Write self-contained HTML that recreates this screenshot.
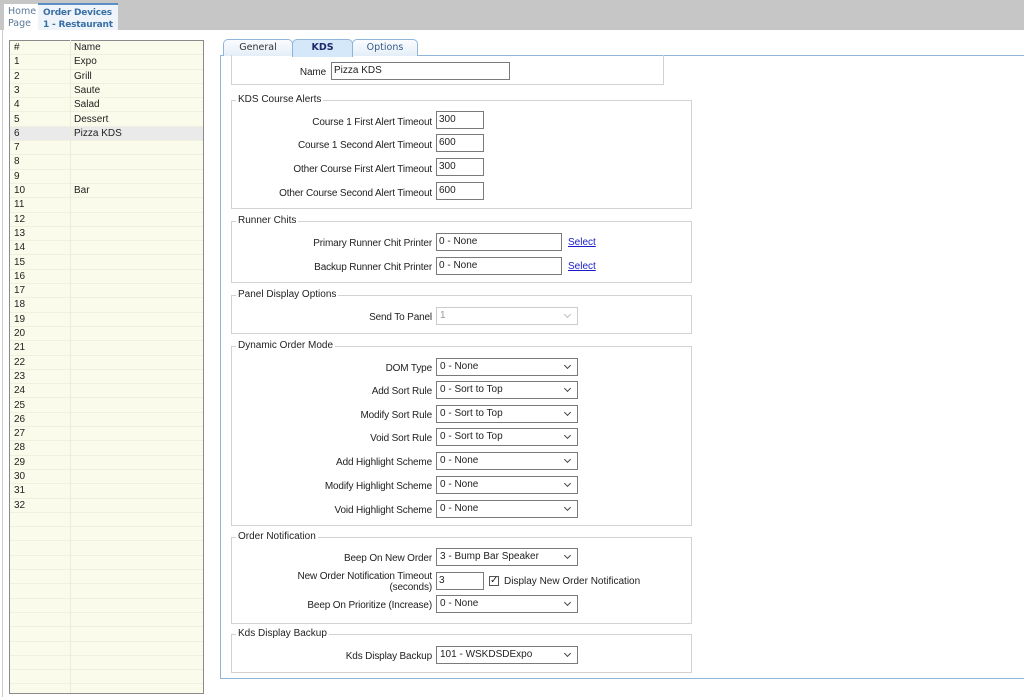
<!DOCTYPE html>
<html><head><meta charset="utf-8"><style>
*{margin:0;padding:0;box-sizing:border-box}
body{width:1024px;height:697px;position:relative;background:#fff;font-family:"Liberation Sans",Arial,sans-serif;font-size:10px;color:#222;overflow:hidden}
.a{position:absolute}
.top{left:0;top:0;width:1024px;height:30px;background:#c6c6c6}
.tab1{left:4px;top:4px;width:34px;height:26px;background:#fff;color:#5a7a9a;line-height:12px;padding:2px 0 0 4px;font-family:"DejaVu Sans",sans-serif;font-size:9.5px;white-space:nowrap}
.tab2{left:38px;top:3px;width:80px;height:27px;background:#eef4fa;border-top:2px solid #5c8fc4;color:#3a6fa5;font-weight:bold;font-family:"DejaVu Sans",sans-serif;font-size:9px;line-height:12px;padding:2px 0 0 5px;white-space:nowrap;overflow:hidden;letter-spacing:-0.2px}
.list{left:9px;top:40px;width:195px;height:654px;border:1px solid #8a8a8a;background:#fbfbec;overflow:hidden}
.row{position:absolute;left:0;width:193px;height:14.3px;border-bottom:1px solid #f0f0e0;line-height:13px}
.row span{position:absolute;left:4px}
.row b{position:absolute;left:64px;font-weight:normal}
.vline{left:70px;top:40px;width:1px;height:653px;background:#ececdc}
.tab{top:39px;height:17px;border:1px solid #8fb6da;border-bottom:none;border-radius:5px 5px 0 0;background:linear-gradient(#fafcfe,#e4eef8);font-family:"DejaVu Sans",sans-serif;font-size:9.5px;text-align:center;line-height:15px;color:#333}
.panel{left:220px;top:55px;width:810px;height:624px;border:1px solid #8fb6da}
.g{position:absolute;border:1px solid #d2d2d2}
.lg{position:absolute;background:#fff;padding:0 2px;left:4px;top:-7px;line-height:12px}
.l{position:absolute;left:232px;width:200px;text-align:right;line-height:13px;letter-spacing:-0.15px}
.i{position:absolute;left:436px;height:18px;border:1px solid #7a7a7a;background:#fff;padding-left:2px;line-height:15px}
.s{position:absolute;left:436px;width:142px;height:18px;border:1px solid #7a7a7a;background:#fff;padding-left:3px;line-height:15px}
.s:after{content:"";position:absolute;right:7px;top:4px;width:4px;height:4px;border-right:1.3px solid #444;border-bottom:1.3px solid #444;transform:rotate(45deg)}
.dis{border-color:#ccc;color:#999}.dis:after{border-color:#bbb}
a{color:#1a1acc;text-decoration:underline;position:absolute}
</style></head><body>
<div class="a top"></div>
<div class="a tab1">Home<br>Page</div>
<div class="a tab2">Order Devices<br>1 - Restaurant</div>
<div class="a" style="left:2px;top:30px;width:1px;height:667px;background:#ccc"></div>

<div class="a list">
<div class="row" style="top:0"><span>#</span><b>Name</b></div>
<div class="row" style="top:14.3px"><span>1</span><b>Expo</b></div>
<div class="row" style="top:28.6px"><span>2</span><b>Grill</b></div>
<div class="row" style="top:42.9px"><span>3</span><b>Saute</b></div>
<div class="row" style="top:57.2px"><span>4</span><b>Salad</b></div>
<div class="row" style="top:71.5px"><span>5</span><b>Dessert</b></div>
<div class="row" style="top:85.8px;background:#eaeaea"><span>6</span><b>Pizza KDS</b></div>
<div class="row" style="top:100.1px"><span>7</span></div>
<div class="row" style="top:114.4px"><span>8</span></div>
<div class="row" style="top:128.7px"><span>9</span></div>
<div class="row" style="top:143px"><span>10</span><b>Bar</b></div>
<div class="row" style="top:157.3px"><span>11</span></div>
<div class="row" style="top:171.6px"><span>12</span></div>
<div class="row" style="top:185.9px"><span>13</span></div>
<div class="row" style="top:200.2px"><span>14</span></div>
<div class="row" style="top:214.5px"><span>15</span></div>
<div class="row" style="top:228.8px"><span>16</span></div>
<div class="row" style="top:243.1px"><span>17</span></div>
<div class="row" style="top:257.4px"><span>18</span></div>
<div class="row" style="top:271.7px"><span>19</span></div>
<div class="row" style="top:286px"><span>20</span></div>
<div class="row" style="top:300.3px"><span>21</span></div>
<div class="row" style="top:314.6px"><span>22</span></div>
<div class="row" style="top:328.9px"><span>23</span></div>
<div class="row" style="top:343.2px"><span>24</span></div>
<div class="row" style="top:357.5px"><span>25</span></div>
<div class="row" style="top:371.8px"><span>26</span></div>
<div class="row" style="top:386.1px"><span>27</span></div>
<div class="row" style="top:400.4px"><span>28</span></div>
<div class="row" style="top:414.7px"><span>29</span></div>
<div class="row" style="top:429px"><span>30</span></div>
<div class="row" style="top:443.3px"><span>31</span></div>
<div class="row" style="top:457.6px"><span>32</span></div>
<div class="row" style="top:471.9px"></div><div class="row" style="top:486.2px"></div>
<div class="row" style="top:500.5px"></div><div class="row" style="top:514.8px"></div>
<div class="row" style="top:529.1px"></div><div class="row" style="top:543.4px"></div>
<div class="row" style="top:557.7px"></div><div class="row" style="top:572px"></div>
<div class="row" style="top:586.3px"></div><div class="row" style="top:600.6px"></div>
<div class="row" style="top:614.9px"></div><div class="row" style="top:629.2px"></div>
</div>
<div class="a vline"></div>

<div class="a panel"></div>
<div class="a tab" style="left:223px;width:70px">General</div>
<div class="a tab" style="left:352px;width:66px;color:#3a5a8a">Options</div>
<div class="a tab" style="left:292px;width:61px;background:#d4e8fa;font-weight:bold;color:#1a2a6a;height:18px">KDS</div>

<div class="g" style="left:231px;top:55px;width:433px;height:30px;border-top:none"></div>
<div class="l" style="top:66px;left:126px">Name</div>
<div class="i" style="top:62px;left:331px;width:179px">Pizza KDS</div>

<div class="g" style="left:231px;top:100px;width:461px;height:109px"><div class="lg">KDS Course Alerts</div></div>
<div class="l" style="top:116px">Course 1 First Alert Timeout</div><div class="i" style="top:111px;width:48px">300</div>
<div class="l" style="top:139px">Course 1 Second Alert Timeout</div><div class="i" style="top:134px;width:48px">600</div>
<div class="l" style="top:163px">Other Course First Alert Timeout</div><div class="i" style="top:158px;width:48px">300</div>
<div class="l" style="top:187px">Other Course Second Alert Timeout</div><div class="i" style="top:182px;width:48px">600</div>

<div class="g" style="left:231px;top:221px;width:461px;height:62px"><div class="lg">Runner Chits</div></div>
<div class="l" style="top:237px">Primary Runner Chit Printer</div><div class="i" style="top:233px;width:126px">0 - None</div><a style="left:568px;top:237px">Select</a>
<div class="l" style="top:261px">Backup Runner Chit Printer</div><div class="i" style="top:257px;width:126px">0 - None</div><a style="left:568px;top:261px">Select</a>

<div class="g" style="left:231px;top:295px;width:461px;height:39px"><div class="lg">Panel Display Options</div></div>
<div class="l" style="top:311px">Send To Panel</div><div class="s dis" style="top:307px">1</div>

<div class="g" style="left:231px;top:346px;width:461px;height:180px"><div class="lg">Dynamic Order Mode</div></div>
<div class="l" style="top:362px">DOM Type</div><div class="s" style="top:358px">0 - None</div>
<div class="l" style="top:385px">Add Sort Rule</div><div class="s" style="top:381px">0 - Sort to Top</div>
<div class="l" style="top:409px">Modify Sort Rule</div><div class="s" style="top:405px">0 - Sort to Top</div>
<div class="l" style="top:432px">Void Sort Rule</div><div class="s" style="top:428px">0 - Sort to Top</div>
<div class="l" style="top:456px">Add Highlight Scheme</div><div class="s" style="top:452px">0 - None</div>
<div class="l" style="top:480px">Modify Highlight Scheme</div><div class="s" style="top:476px">0 - None</div>
<div class="l" style="top:504px">Void Highlight Scheme</div><div class="s" style="top:500px">0 - None</div>

<div class="g" style="left:231px;top:537px;width:461px;height:87px"><div class="lg">Order Notification</div></div>
<div class="l" style="top:552px">Beep On New Order</div><div class="s" style="top:548px">3 - Bump Bar Speaker</div>
<div class="l" style="top:571px;line-height:11px">New Order Notification Timeout<br>(seconds)</div><div class="i" style="top:572px;width:48px">3</div>
<div class="a" style="left:489px;top:576px;width:10px;height:10px;border:1px solid #555;font-size:10px;line-height:8px;text-align:center">✓</div>
<div class="a" style="left:504px;top:576px">Display New Order Notification</div>
<div class="l" style="top:599px">Beep On Prioritize (Increase)</div><div class="s" style="top:595px">0 - None</div>

<div class="g" style="left:231px;top:634px;width:461px;height:39px"><div class="lg">Kds Display Backup</div></div>
<div class="l" style="top:650px">Kds Display Backup</div><div class="s" style="top:646px">101 - WSKDSDExpo</div>
</body></html>
